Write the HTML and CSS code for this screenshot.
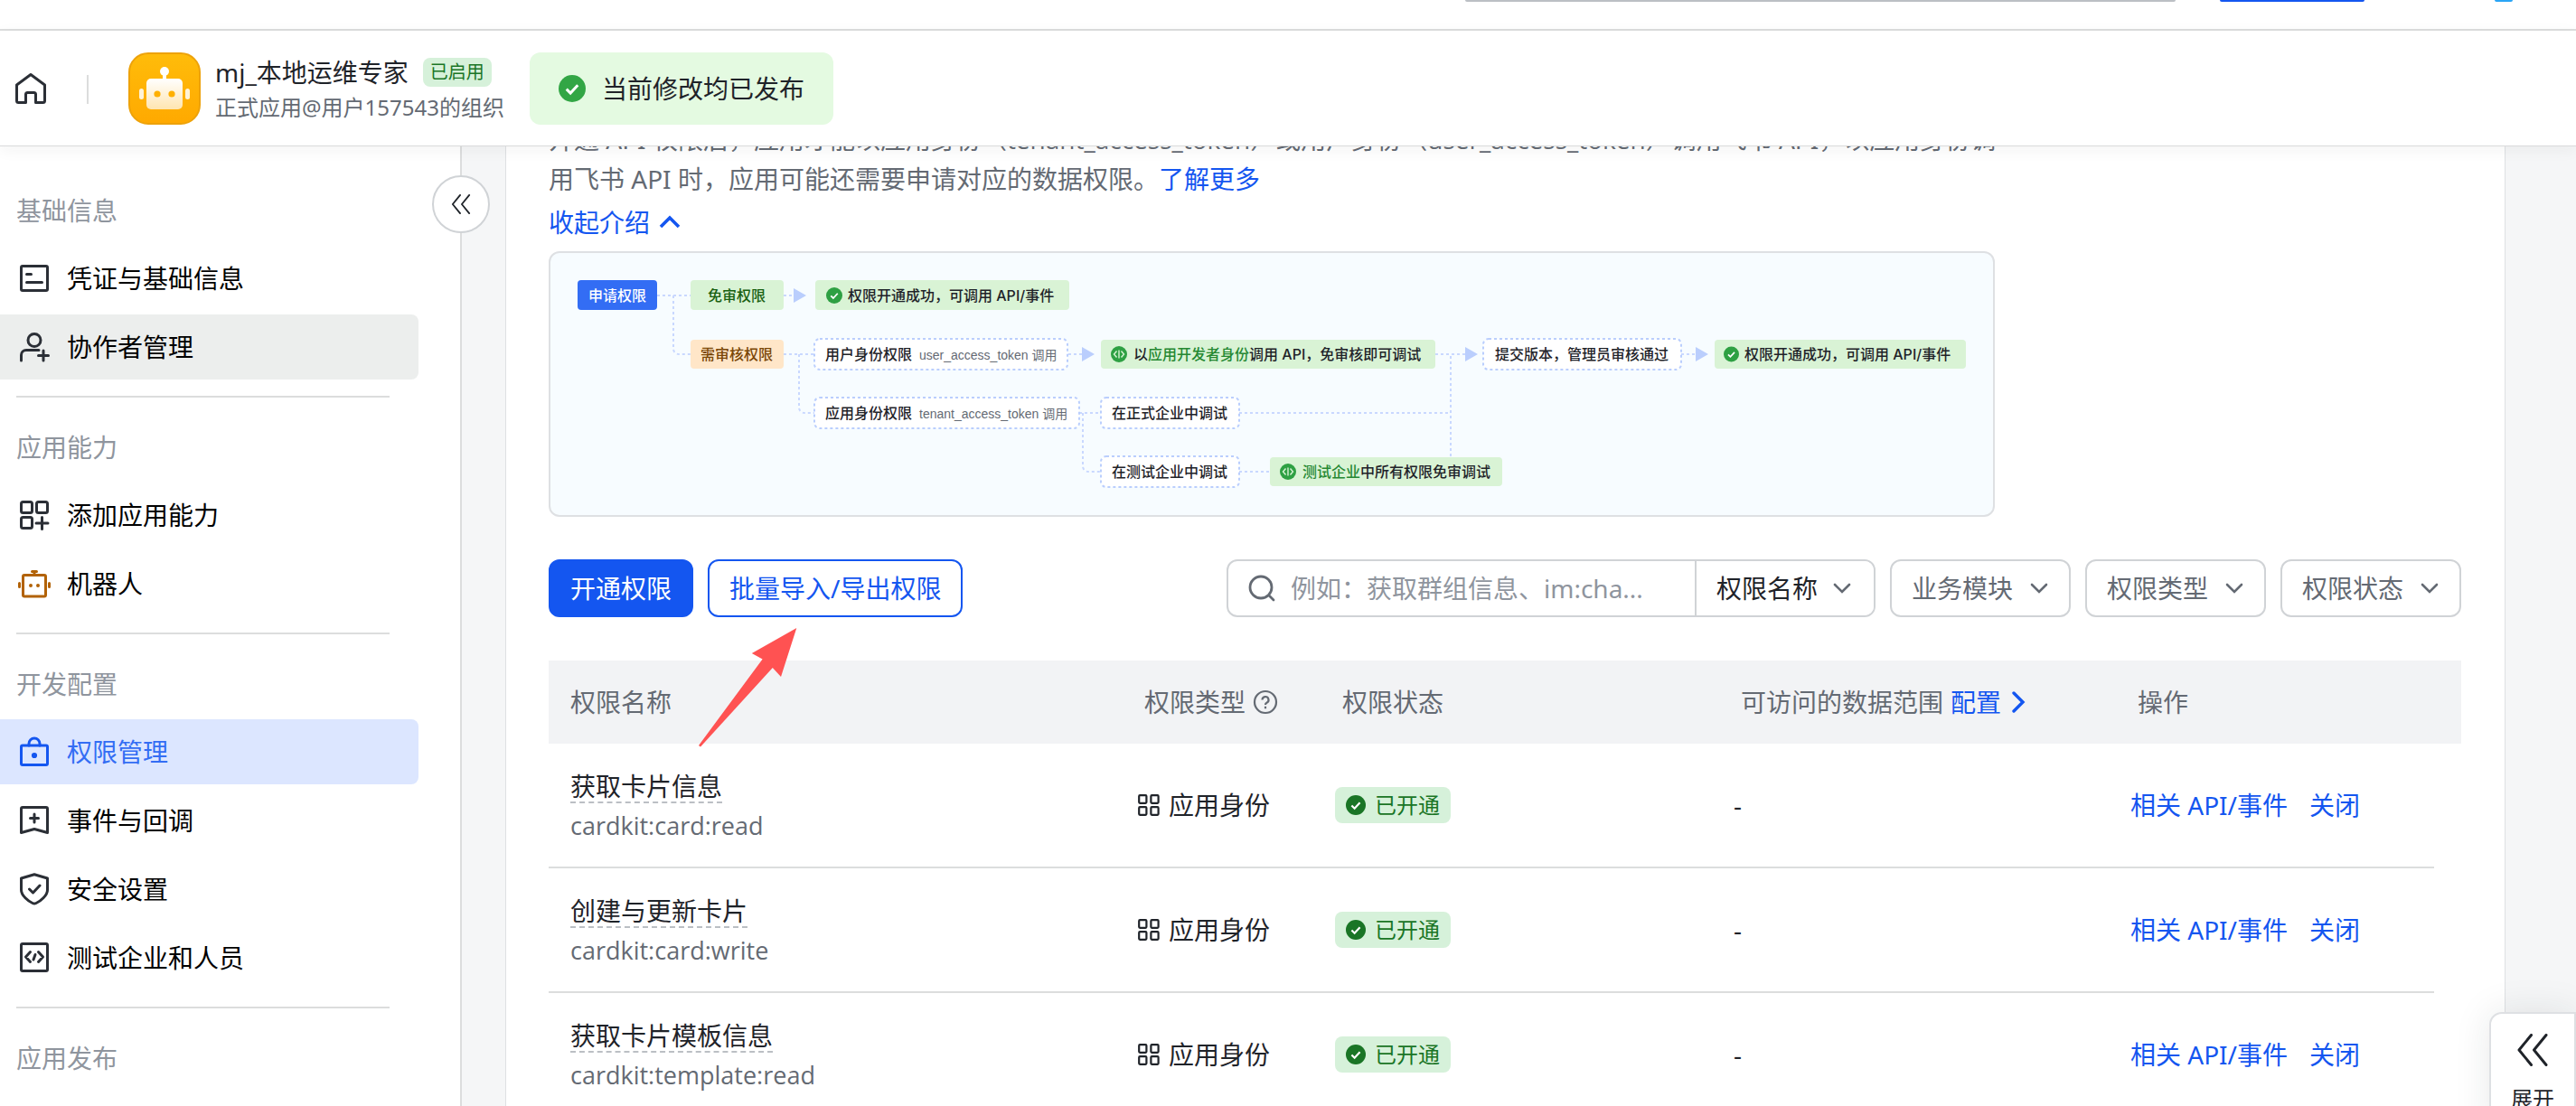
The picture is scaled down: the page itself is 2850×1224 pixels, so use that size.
FILE: index.html
```html
<!DOCTYPE html>
<html lang="zh-CN">
<head>
<meta charset="utf-8">
<meta name="viewport" content="width=device-width, initial-scale=1">
<title>权限管理</title>
<link rel="stylesheet" href="styles.css">
</head>
<body>
<svg class="sprite" aria-hidden="true">
  <symbol id="check" viewBox="0 0 24 24"><circle cx="12" cy="12" r="12" fill="currentColor"/><path d="M7 12.5l3.5 3.5 6.5-7" fill="none" stroke="#fff" stroke-width="2.4"/></symbol>
  <symbol id="down" viewBox="0 0 20 20"><path d="M2 6l8 8 8-8" fill="none" stroke="currentColor" stroke-width="2.6" stroke-linecap="round"/></symbol>
  <symbol id="grid" viewBox="0 0 24 24"><g fill="none" stroke="currentColor" stroke-width="2.2"><rect x="1.2" y="1.2" width="8.2" height="8.6" rx="1"/><rect x="14.4" y="1.2" width="8.2" height="8.6" rx="1"/><rect x="1.2" y="14.2" width="8.2" height="8.6" rx="1"/><rect x="14.4" y="14.2" width="8.2" height="8.6" rx="1"/></g></symbol>
  <symbol id="collapse" viewBox="0 0 24 24"><path d="M11 1L2 12l9 11M22 1l-9 11 9 11" fill="none" stroke="currentColor" stroke-width="2" stroke-linecap="round" stroke-linejoin="round"/></symbol>
  <symbol id="dev" viewBox="0 0 18 18"><circle cx="9" cy="9" r="9" fill="#2ea043"/><path d="M6.500 5.500L3.500 9l3 3.500M11.500 5.500l3 3.500-3 3.500M9 4.500v9" fill="none" stroke="#d9f3d5" stroke-width="1.400"/></symbol>
</svg>

<div class="topbar">
  <span class="top-search"></span>
  <span class="top-button"></span>
  <span class="top-avatar"></span>
</div>

<header class="header">
  <a class="home" href="#" aria-label="首页">
    <svg width="36" height="36" viewBox="0 0 36 36" fill="none" stroke="currentColor" stroke-width="3" stroke-linejoin="round"><path d="M2.500 14L18 2.500 33.500 14v17.500a2 2 0 0 1-2 2H23.500V24.500a2 2 0 0 0-2-2h-7a2 2 0 0 0-2 2v9H4.500a2 2 0 0 1-2-2z"/></svg>
  </a>
  <span class="rule"></span>
  <svg class="app-icon" width="80" height="80" viewBox="0 0 80 80">
    <defs>
      <linearGradient id="amber" x1="0" y1="0" x2="0" y2="1"><stop offset="0" stop-color="#ffbc0a"/><stop offset="1" stop-color="#ffa900"/></linearGradient>
      <linearGradient id="cream" x1="0" y1="0" x2="0" y2="1"><stop offset="0" stop-color="#fff"/><stop offset="1" stop-color="#ffe5b0"/></linearGradient>
    </defs>
    <rect x="1" y="1" width="78" height="78" rx="21" fill="url(#amber)" stroke="#eda20a" stroke-width="2"/>
    <circle cx="40" cy="21" r="5" fill="#fff"/><rect x="38" y="23" width="4" height="8" fill="#fff"/>
    <rect x="20" y="29" width="40" height="34" rx="5" fill="url(#cream)"/>
    <rect x="12" y="40" width="5" height="12" rx="2.500" fill="#fff3d8"/><rect x="63" y="40" width="5" height="12" rx="2.500" fill="#fff3d8"/>
    <circle cx="32" cy="46" r="3.600" fill="#ffb000"/><circle cx="48" cy="46" r="3.600" fill="#ffb000"/>
  </svg>
  <div class="app">
    <div class="app-title"><span>mj_本地运维专家</span><span class="tag-small">已启用</span></div>
    <div class="app-sub">正式应用@用户157543的组织</div>
  </div>
  <div class="notice"><svg width="30" height="30"><use href="#check"/></svg><span>当前修改均已发布</span></div>
</header>

<div class="body">
  <nav class="sidebar">
    <section>
      <h2>基础信息</h2>
      <a href="#"><svg class="nav-icon" viewBox="0 0 36 36"><rect x="3.500" y="4.500" width="29" height="27" rx="1.500"/><path d="M9.500 13.500H14.500M9.500 22.500h17"/></svg>凭证与基础信息</a>
      <a href="#" class="hover"><svg class="nav-icon" viewBox="0 0 36 36"><circle cx="18" cy="10.500" r="7"/><path d="M3.500 33v-6a5.500 5.500 0 0 1 5.500-5.500h14M28 22v11M22.500 27.500h11"/></svg>协作者管理</a>
    </section>
    <section>
      <h2>应用能力</h2>
      <a href="#"><svg class="nav-icon" viewBox="0 0 36 36"><rect x="3.500" y="3.500" width="12" height="12" rx="2"/><rect x="20.500" y="3.500" width="12" height="12" rx="2"/><rect x="3.500" y="20.500" width="12" height="12" rx="2"/><path d="M26.500 20.500v13M20 27h13"/></svg>添加应用能力</a>
      <a href="#"><svg class="nav-icon bot" viewBox="0 0 36 36"><rect x="5.500" y="8.500" width="25" height="23.500" rx="1.500"/><path d="M15.500 4.500h5M18 5v3M1.500 17.500v4M34.500 17.500v4"/><path d="M14 20v.1M22 20v.1" stroke-width="4"/></svg>机器人</a>
    </section>
    <section>
      <h2>开发配置</h2>
      <a href="#" class="active" aria-current="page"><svg class="nav-icon" viewBox="0 0 36 36"><rect x="3.500" y="11" width="29" height="21.500" rx="1.500"/><path d="M12 11V9a6 6 0 0 1 12 0v2"/><circle cx="18" cy="22" r="1.600"/></svg>权限管理</a>
      <a href="#"><svg class="nav-icon" viewBox="0 0 36 36"><path d="M3.500 5a1.500 1.500 0 0 1 1.500-1.500h26A1.500 1.500 0 0 1 32.500 5v26.500L18 27.500 3.500 31.500zM18 11v9M13.500 15.500h9"/></svg>事件与回调</a>
      <a href="#"><svg class="nav-icon" viewBox="0 0 36 36"><path d="M18 1.800L32.500 6v13c0 6-8 12.500-12.500 14.500a5 5 0 0 1-4 0C11.500 31.500 3.500 25 3.500 19V6zM12.500 18l4 4 7.500-8"/></svg>安全设置</a>
      <a href="#"><svg class="nav-icon" viewBox="0 0 36 36"><rect x="3.500" y="2.500" width="29" height="30" rx="1.500"/><path d="M13.500 11.500L8.500 17l5 5.500M22.500 11.500l5 5.500-5 5.500M19 14.500l-2 5.500"/></svg>测试企业和人员</a>
    </section>
    <section>
      <h2>应用发布</h2>
    </section>
    <button class="collapse" aria-label="收起侧栏"><svg width="24" height="22"><use href="#collapse"/></svg></button>
  </nav>

  <main class="main">
    <div class="panel">
      <p class="intro">开通 API 权限后，应用才能以应用身份（<span class="token">tenant_access_token</span>）或用户身份（<span class="token">user_access_token</span>）调用飞书 API，以应用身份调<br>用飞书 API 时，应用可能还需要申请对应的数据权限。<a href="#">了解更多</a></p>
      <button class="fold">收起介绍 <svg width="24" height="24" viewBox="0 0 24 24"><path d="M2 17L12 7l10 10" fill="none" stroke="currentColor" stroke-width="3.600"/></svg></button>

      <div class="diagram">
        <svg viewBox="2 2 1596 290">
          <g class="wire">
            <path d="M120 49H157M138 49V108a6 6 0 0 0 6 6H157M260 49H272M260 114H295M277 114V173a6 6 0 0 0 6 6H295M575 114H591M587 179H611M591 179V238a6 6 0 0 0 6 6H611M764 179H998M764 244H798M981 114H1015M998 116V228M1253 114H1270"/>
          </g>
          <g class="tip"><path d="M271 41l14 8-14 8zM590 106l14 8-14 8zM1014 106l14 8-14 8zM1269 106l14 8-14 8z"/></g>
          <rect x="32" y="32" width="88" height="33" rx="4" fill="#336df4"/>
          <rect x="157" y="32" width="103" height="33" rx="4" fill="#d9f3d5"/>
          <rect x="157" y="98" width="103" height="32" rx="4" fill="#ffe6c8"/>
          <g class="done">
            <rect x="295" y="32" width="281" height="33" rx="4"/><rect x="611" y="98" width="370" height="32" rx="4"/>
            <rect x="1290" y="98" width="278" height="32" rx="4"/><rect x="798" y="228" width="257" height="32" rx="4"/>
          </g>
          <g class="step">
            <rect x="294" y="97" width="280" height="34" rx="6"/><rect x="294" y="162" width="293" height="34" rx="6"/>
            <rect x="611" y="162" width="153" height="34" rx="6"/><rect x="611" y="227" width="153" height="34" rx="6"/>
            <rect x="1034" y="97" width="219" height="34" rx="6"/>
          </g>
          <g color="#2ea043"><use href="#check" x="307" y="40" width="18" height="18"/><use href="#check" x="1300" y="105" width="17" height="18"/></g>
          <use href="#dev" x="622" y="105" width="18" height="18"/><use href="#dev" x="809" y="235" width="18" height="18"/>
          <text class="on-blue" x="76" y="55" text-anchor="middle">申请权限</text>
          <text class="on-green" x="208" y="55" text-anchor="middle">免审权限</text>
          <text class="on-orange" x="208" y="120" text-anchor="middle">需审核权限</text>
          <text x="331" y="55">权限开通成功，可调用 API/事件</text>
          <text x="306" y="120">用户身份权限</text><text class="note" x="410" y="120">user_access_token 调用</text>
          <text x="306" y="185">应用身份权限</text><text class="note" x="410" y="185">tenant_access_token 调用</text>
          <text x="647" y="120">以<tspan fill="#258832">应用开发者身份</tspan>调用 API，免审核即可调试</text>
          <text x="623" y="185">在正式企业中调试</text>
          <text x="623" y="250">在测试企业中调试</text>
          <text x="834" y="250"><tspan fill="#258832">测试企业</tspan>中所有权限免审调试</text>
          <text x="1047" y="120">提交版本，管理员审核通过</text>
          <text x="1323" y="120">权限开通成功，可调用 API/事件</text>
        </svg>
      </div>

      <div class="toolbar">
        <button class="btn primary">开通权限</button>
        <button class="btn">批量导入/导出权限</button>
        <div class="search">
          <svg width="32" height="32" viewBox="0 0 32 32" fill="none" stroke="#646a73" stroke-width="2.800" stroke-linecap="round"><circle cx="15" cy="15" r="12"/><path d="M24 24l5 5"/></svg>
          <input type="text" aria-label="搜索权限" placeholder="例如：获取群组信息、im:cha...">
          <label class="pick dark"><select aria-label="搜索字段"><option>权限名称</option></select><svg width="20" height="20"><use href="#down"/></svg></label>
        </div>
        <label class="pick"><select aria-label="业务模块"><option>业务模块</option></select><svg width="20" height="20"><use href="#down"/></svg></label>
        <label class="pick"><select aria-label="权限类型"><option>权限类型</option></select><svg width="20" height="20"><use href="#down"/></svg></label>
        <label class="pick"><select aria-label="权限状态"><option>权限状态</option></select><svg width="20" height="20"><use href="#down"/></svg></label>
        <svg class="pointer" width="110" height="132" viewBox="0 0 110 132"><path d="M108.300 0L58.800 28l11.800 6.500L0 130l2 1.500L81.800 44l9.200 10z" fill="#ff5252"/></svg>
      </div>

      <table>
        <colgroup><col><col class="c-type"><col class="c-state"><col class="c-range"><col class="c-act"><col class="c-gutter"></colgroup>
        <thead>
          <tr>
            <th>权限名称</th>
            <th><span class="cell">权限类型<svg width="28" height="28" viewBox="0 0 28 28" fill="none" stroke="currentColor" stroke-width="2.200"><circle cx="14" cy="14" r="12"/><path d="M10.500 11.500a3.500 3.500 0 1 1 5 3.200c-1 .5-1.500 1-1.500 2.300M14 18.800v2.400"/></svg></span></th>
            <th>权限状态</th>
            <th><span class="cell">可访问的数据范围 <a href="#">配置<svg width="28" height="24" viewBox="0 0 28 24"><path d="M10 2l10 10-10 10" fill="none" stroke="currentColor" stroke-width="3.400" stroke-linecap="round"/></svg></a></span></th>
            <th>操作</th>
            <th></th>
          </tr>
        </thead>
        <tbody>
          <tr>
            <td><span class="name">获取卡片信息</span><span class="code">cardkit:card:read</span></td>
            <td><span class="cell role"><svg width="24" height="24"><use href="#grid"/></svg>应用身份</span></td>
            <td><span class="tag"><svg width="22" height="22"><use href="#check"/></svg>已开通</span></td>
            <td>-</td>
            <td><span class="links"><a href="#">相关 API/事件</a><a href="#">关闭</a></span></td>
            <td></td>
          </tr>
          <tr>
            <td><span class="name">创建与更新卡片</span><span class="code">cardkit:card:write</span></td>
            <td><span class="cell role"><svg width="24" height="24"><use href="#grid"/></svg>应用身份</span></td>
            <td><span class="tag"><svg width="22" height="22"><use href="#check"/></svg>已开通</span></td>
            <td>-</td>
            <td><span class="links"><a href="#">相关 API/事件</a><a href="#">关闭</a></span></td>
            <td></td>
          </tr>
          <tr>
            <td><span class="name">获取卡片模板信息</span><span class="code">cardkit:template:read</span></td>
            <td><span class="cell role"><svg width="24" height="24"><use href="#grid"/></svg>应用身份</span></td>
            <td><span class="tag"><svg width="22" height="22"><use href="#check"/></svg>已开通</span></td>
            <td>-</td>
            <td><span class="links"><a href="#">相关 API/事件</a><a href="#">关闭</a></span></td>
            <td></td>
          </tr>
        </tbody>
      </table>
    </div>
  </main>
</div>

<button class="expand"><svg width="40" height="36"><use href="#collapse"/></svg><span>展开</span></button>
</body>
</html>
```

FILE: styles.css
```css
* { box-sizing: border-box; }

body {
  margin: 0;
  height: 100vh;
  display: flex;
  flex-direction: column;
  overflow: hidden;
  position: relative;
  background: #fff;
  color: #1f2329;
  font: 28px/44px "Noto Sans", "Noto Sans CJK SC", sans-serif;
}

a { color: #1456f0; text-decoration: none; }
button, input, select { font: inherit; color: inherit; margin: 0; }
button { cursor: pointer; }
svg { flex: none; display: block; }
.sprite { position: absolute; width: 0; height: 0; }

/* Bottom edge of the scrolled site bar */
.topbar {
  flex: none;
  display: flex;
  justify-content: flex-end;
  height: 34px;
  padding-right: 70px;
  border-bottom: 2px solid #dcdddd;
}
.topbar span { height: 2px; border-radius: 0 0 4px 4px; }
.top-search { width: 786px; margin-right: 49px; background: #bbbfc4; }
.top-button { width: 160px; margin-right: 144px; background: #1456f0; }
.top-avatar { width: 20px; background: #2aa5f5; }

/* App header */
.header {
  flex: none;
  display: flex;
  align-items: center;
  height: 128px;
  padding: 0 16px;
  background: #fff;
  border-bottom: 1px solid #d9dadb;
  box-shadow: 0 4px 16px rgba(31, 35, 41, .05);
  position: relative;
  z-index: 2;
}
.home { color: #2b2f36; }
.rule { width: 2px; height: 32px; margin: 2px 44px 0; background: #dcdddd; }
.app { margin: 0 28px 0 16px; }
.app-title { display: flex; align-items: center; gap: 16px; line-height: 42px; }
.app-sub { color: #646a73; font-size: 24px; line-height: 36px; }
.tag-small {
  padding: 0 8px;
  border-radius: 8px;
  background: #d6f1da;
  color: #1a7526;
  font-size: 20px;
  line-height: 32px;
}
.notice {
  display: flex;
  align-items: center;
  gap: 18px;
  height: 80px;
  padding: 0 32px;
  border-radius: 12px;
  background: #e4fae1;
}
.notice svg { color: #32a645; }

.body { flex: 1; min-height: 0; display: flex; }

/* Sidebar */
.sidebar {
  flex: none;
  width: 511px;
  padding: 51px 46px 0 0;
  border-right: 2px solid #dcdddd;
  position: relative;
}
.sidebar section + section::before {
  content: "";
  display: block;
  height: 2px;
  margin: 18px 32px 35px 18px;
  background: #dcdddd;
}
.sidebar h2 {
  margin: 0 0 19px 18px;
  color: #8f959e;
  font-size: 28px;
  font-weight: 400;
  line-height: 40px;
}
.sidebar a {
  display: flex;
  align-items: center;
  gap: 18px;
  height: 72px;
  padding-left: 20px;
  border-radius: 0 8px 8px 0;
  color: #000;
}
.sidebar a + a { margin-top: 4px; }
.sidebar .hover { background: #eceeed; }
.sidebar .active { background: #dce6ff; color: #336df4; }
.nav-icon {
  width: 36px;
  height: 36px;
  fill: none;
  stroke: #2b2f36;
  stroke-width: 3;
  stroke-linecap: round;
  stroke-linejoin: round;
}
.nav-icon.bot { stroke: #b26206; }
.active .nav-icon { stroke: #1456f0; }
.collapse {
  position: absolute;
  top: 32px;
  right: -33px;
  z-index: 1;
  display: flex;
  align-items: center;
  justify-content: center;
  width: 64px;
  height: 64px;
  padding: 0;
  border: 2px solid #d0d3d6;
  border-radius: 50%;
  background: #fff;
}

/* Content panel */
.main {
  flex: 1;
  min-width: 0;
  padding: 0 78px 0 48px;
  overflow: hidden;
  background: #f5f6f7;
}
.panel {
  min-height: 100%;
  padding: 0 48px 0 47px;
  border: solid #dee0e3;
  border-width: 0 1px;
  background: #fff;
}
.intro { margin: -30px 0 0; color: #646a73; line-height: 44px; white-space: nowrap; }
.token { font-family: "Open Sans", sans-serif; }
.fold {
  display: flex;
  align-items: center;
  gap: 10px;
  margin: 4px 0 10px;
  padding: 0;
  border: 0;
  background: none;
  color: #1456f0;
  line-height: 44px;
}
.diagram {
  max-width: 1600px;
  border: 2px solid #dee0e3;
  border-radius: 12px;
  background: #f7fcff;
}
.diagram svg { width: 100%; height: auto; }
.diagram text { font: 500 16px Inter, "Noto Sans CJK SC", sans-serif; fill: #1f2329; }
.diagram .on-blue { fill: #fff; }
.diagram .on-green { fill: #186010; }
.diagram .on-orange { fill: #7a4706; }
.diagram .note { font: 400 14px "Liberation Sans", "Noto Sans CJK SC", sans-serif; fill: #646a73; }
.wire { fill: none; stroke: #c9d8ff; stroke-width: 2; stroke-dasharray: 3 3; }
.tip { fill: #bacefd; }
.done { fill: #d9f3d5; }
.step { fill: #fff; stroke: #bacefd; stroke-width: 2; stroke-dasharray: 3 3; }

/* Toolbar */
.toolbar {
  position: relative;
  display: flex;
  gap: 16px;
  margin: 47px 0 48px;
}
.btn {
  height: 64px;
  padding: 0 22px;
  border: 2px solid #1456f0;
  border-radius: 12px;
  background: #fff;
  color: #1456f0;
  white-space: nowrap;
}
.btn.primary { background: #1456f0; color: #fff; }
.search {
  display: flex;
  align-items: center;
  width: 718px;
  height: 64px;
  margin-left: auto;
  padding-left: 21px;
  border: 2px solid #d0d3d6;
  border-radius: 12px;
}
.search input {
  flex: 1;
  min-width: 0;
  height: 60px;
  padding: 0 16px;
  border: 0;
  outline: 0;
  background: none;
}
.search input::placeholder { color: #8f959e; opacity: 1; }
.pick { position: relative; flex: none; width: 200px; color: #646a73; }
.pick select {
  width: 100%;
  height: 64px;
  padding: 0 52px 0 22px;
  border: 2px solid #d0d3d6;
  border-radius: 12px;
  background: #fff;
  appearance: none;
}
.pick svg { position: absolute; top: 22px; right: 25px; pointer-events: none; }
.pick.dark { width: 198px; }
.pick.dark select { height: 60px; color: #1f2329; border-width: 0 0 0 2px; border-radius: 0 10px 10px 0; }
.pick.dark svg { top: 20px; }
.pointer { position: absolute; left: 166px; top: 76px; z-index: 1; pointer-events: none; }

/* Permission table */
table { width: 100%; table-layout: fixed; border-collapse: separate; border-spacing: 0; }
.c-type { width: 219px; }
.c-state { width: 441px; }
.c-range { width: 439px; }
.c-act { width: 336px; }
.c-gutter { width: 30px; }
th {
  height: 92px;
  padding: 0 0 0 8px;
  background: #f2f3f5;
  color: #646a73;
  font-weight: 400;
  text-align: left;
  white-space: nowrap;
}
td { height: 138px; padding: 0; border-bottom: 2px solid #dcdddd; white-space: nowrap; }
th:first-child, td:first-child { padding-left: 24px; }
td:last-child { border-bottom: 0; }
.cell { display: flex; align-items: center; gap: 8px; }
.cell a { display: flex; align-items: center; gap: 4px; }
.cell.role { gap: 10px; padding-left: 1px; }
.name {
  width: max-content;
  display: block;
  padding-top: 4px;
  border-bottom: 2px dashed #bbbfc4;
  line-height: 34px;
}
.code {
  display: block;
  margin-top: 6px;
  color: #646a73;
  font-family: "Open Sans", sans-serif;
  font-size: 27px;
  line-height: 38px;
}
.tag {
  display: flex;
  align-items: center;
  gap: 10px;
  width: max-content;
  height: 40px;
  padding: 0 12px;
  border-radius: 8px;
  background: #d6f1da;
  color: #1a7526;
  font-size: 24px;
}
.links { display: flex; gap: 24px; }

/* Floating helper at the window's right edge */
.expand {
  position: absolute;
  right: 0;
  top: 1120px;
  z-index: 3;
  display: flex;
  flex-direction: column;
  align-items: center;
  gap: 18px;
  width: 96px;
  height: 140px;
  padding: 22px 0 0;
  border: 2px solid #dee0e3;
  border-radius: 14px 0 0 14px;
  background: #fff;
  box-shadow: 0 0 40px rgba(31, 35, 41, .1);
  font-size: 24px;
  line-height: 36px;
}
```
